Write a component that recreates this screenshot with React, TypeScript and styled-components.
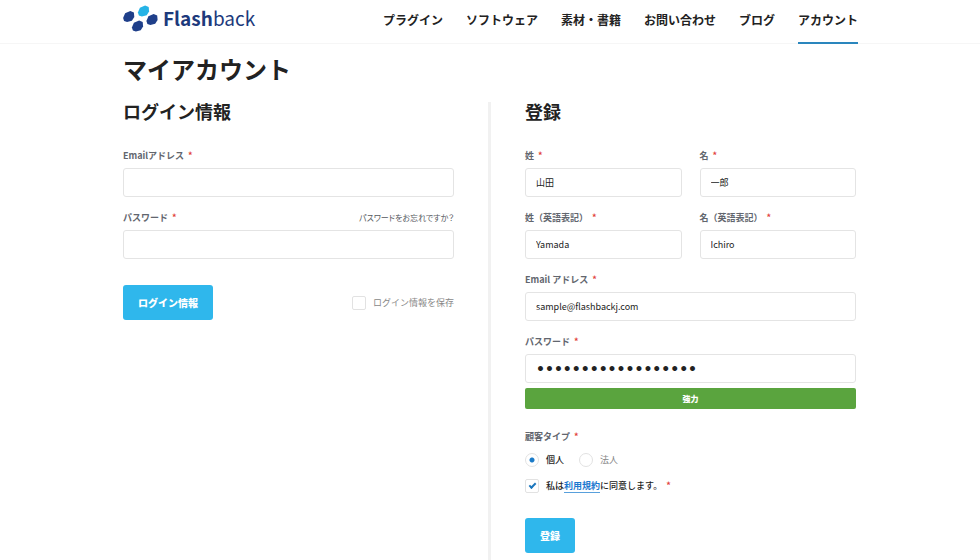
import React from "react";
import styled, { createGlobalStyle, css } from "styled-components";

const GlobalStyle = createGlobalStyle`
  *, *::before, *::after { box-sizing: border-box; }
  body {
    margin: 0;
    background: #fff;
    color: #222;
    font-family: "Noto Sans CJK JP", "Noto Sans", sans-serif;
    font-size: 9px;
    line-height: 13px;
  }
  h1, h2, p, ul { margin: 0; padding: 0; }
  button, input { font-family: inherit; }
`;

const Page = styled.div`
  min-height: 100vh;
  display: flex;
  flex-direction: column;
`;

const Header = styled.header`
  display: flex;
  justify-content: space-between;
  height: 44px;
  padding: 0 122px 0 123px;
  border-bottom: 1px solid #f6f6f6;
`;

const LogoLink = styled.a`
  display: flex;
  align-items: center;
  height: 36px;
  gap: 5px;
  color: #1d3a7c;
  text-decoration: none;
  font-size: 19px;
  line-height: 36px;
`;

const LogoMark = styled.svg`
  display: block;
  width: 35px;
  height: 28px;
`;

const LogoStrong = styled.span`
  font-weight: 700;
`;

const LogoLight = styled.span`
  font-weight: 400;
`;

const NavList = styled.ul`
  display: flex;
  gap: 23px;
  list-style: none;
`;

const NavLink = styled.a<{ $active?: boolean }>`
  display: block;
  height: 44px;
  color: #222;
  font-size: 12px;
  font-weight: 700;
  line-height: 40px;
  text-decoration: none;
  white-space: nowrap;
  border-bottom: 2px solid ${(p) => (p.$active ? "#2a86bd" : "transparent")};
`;

const Main = styled.main`
  flex: 1;
  display: flex;
  flex-direction: column;
  padding: 0 124px 0 123px;
`;

const PageTitle = styled.h1`
  margin-bottom: 8px;
  font-size: 24px;
  line-height: 50px;
`;

const Columns = styled.div`
  flex: 1;
  display: grid;
  grid-template-columns: 1fr 3px 1fr;
  column-gap: 34px;
`;

const Divider = styled.div`
  background: #f1f1f1;
`;

const SectionTitle = styled.h2`
  margin-bottom: 29px;
  font-size: 18px;
  line-height: 18px;
`;

const Form = styled.form`
  display: flex;
  flex-direction: column;
  gap: 14px;
`;

const FieldPair = styled.div`
  display: grid;
  grid-template-columns: 1fr 1fr;
  gap: 18px;
`;

const FieldBox = styled.div`
  display: flex;
  flex-direction: column;
  gap: 6px;
  min-width: 0;
`;

const LabelRow = styled.div`
  display: flex;
  justify-content: space-between;
`;

const labelText = css`
  color: #62666e;
  font-size: 9px;
  font-weight: 700;
  line-height: 13px;
`;

const Label = styled.label`
  ${labelText}
`;

const Star = styled.span`
  margin-left: 4px;
  color: #e2433c;
  font-weight: 700;
`;

const TextInput = styled.input`
  width: 100%;
  height: 29px;
  padding: 0 10px;
  border: 1px solid #e4e4e4;
  border-radius: 3px;
  background: #fff;
  color: #222;
  font-size: 9px;
  font-weight: 400;
  outline: none;
  &[type="password"] {
    font-family: "DejaVu Sans", sans-serif;
    font-size: 14px;
    font-weight: 700;
  }
`;

const ForgotLink = styled.a`
  color: #55585e;
  font-size: 8px;
  font-feature-settings: "palt";
  text-decoration: none;
`;

const Strength = styled.p`
  margin-top: -1px;
  border-radius: 2px;
  background: #5aa43e;
  color: #fff;
  font-size: 8px;
  font-weight: 900;
  line-height: 21px;
  text-align: center;
`;

const SubmitButton = styled.button`
  height: 35px;
  padding: 0 15px;
  border: 0;
  border-radius: 3px;
  background: #2fb7ec;
  color: #fff;
  font-size: 10px;
  font-weight: 900;
  cursor: pointer;
`;

const LoginActions = styled.div`
  display: flex;
  align-items: center;
  justify-content: space-between;
  margin-top: 12px;
`;

const Choice = styled.label<{ $muted?: boolean }>`
  display: flex;
  align-items: center;
  gap: 7px;
  color: ${(p) => (p.$muted ? "#888" : "#222")};
  font-size: 9px;
  font-weight: ${(p) => (p.$muted ? 400 : 500)};
  line-height: 14px;
`;

const Radio = styled.input`
  appearance: none;
  width: 14px;
  height: 14px;
  margin: 0;
  border: 1px solid #e2e2e2;
  border-radius: 50%;
  &:checked {
    background: radial-gradient(circle, #1b7bc8 0 2px, transparent 3px);
  }
`;

const Checkbox = styled.input`
  appearance: none;
  flex: none;
  width: 14px;
  height: 14px;
  margin: 0;
  border: 1px solid #e2e2e2;
  border-radius: 2px;
  display: grid;
  place-items: center;
  &:checked::before {
    content: "";
    width: 7px;
    height: 4px;
    margin-bottom: 2px;
    border: solid #1b76bd;
    border-width: 0 0 2px 2px;
    transform: rotate(-45deg);
  }
`;

const TypeGroup = styled.fieldset`
  margin: 7px 0 0;
  padding: 0;
  border: 0;
  min-width: 0;
`;

const TypeLegend = styled.legend`
  ${labelText}
  padding: 0;
`;

const Choices = styled.div`
  display: flex;
  gap: 15px;
  margin-top: 10px;
`;

const AgreeRow = styled.div`
  margin-top: -2px;
`;

const TermsLink = styled.a`
  color: #1b78cf;
  font-weight: 700;
  text-decoration: none;
  border-bottom: 1px solid #58a0dc;
`;

const RegisterActions = styled.div`
  margin-top: 11px;
`;

const PasswordGroup = styled.div`
  display: flex;
  flex-direction: column;
  gap: 6px;
`;

type FieldProps = {
  id: string;
  label: string;
  type?: string;
  value?: string;
  aside?: React.ReactNode;
};

function Field({ id, label, type = "text", value, aside }: FieldProps) {
  return (
    <FieldBox>
      <LabelRow>
        <Label htmlFor={id}>
          {label}
          <Star>*</Star>
        </Label>
        {aside}
      </LabelRow>
      <TextInput id={id} type={type} defaultValue={value} />
    </FieldBox>
  );
}

const hexagon = "M-5.6 1.6 L-3.6 -3.2 L1.6 -5.6 L5.2 -4 L5.6 0.4 L3.2 4.2 L-1.6 5.6 L-4.6 4.6 Z";

function Logo() {
  return (
    <LogoLink href="#" aria-label="Flashback">
      <LogoMark viewBox="0 0 35 28" aria-hidden="true">
        <path d={hexagon} transform="translate(20.5 7)" fill="#25b3e6" />
        <path d={hexagon} transform="translate(5.7 12.5)" fill="#1f3f8a" />
        <path d={hexagon} transform="translate(29 15.5)" fill="#1f3f8a" />
        <path d={hexagon} transform="translate(14.5 22)" fill="#1f3f8a" />
      </LogoMark>
      <span>
        <LogoStrong>Flash</LogoStrong>
        <LogoLight>back</LogoLight>
      </span>
    </LogoLink>
  );
}

const navItems = ["プラグイン", "ソフトウェア", "素材・書籍", "お問い合わせ", "ブログ", "アカウント"];

export default function App() {
  return (
    <Page lang="ja">
      <GlobalStyle />
      <Header>
        <Logo />
        <nav>
          <NavList>
            {navItems.map((item) => (
              <li key={item}>
                <NavLink href="#" $active={item === "アカウント"}>
                  {item}
                </NavLink>
              </li>
            ))}
          </NavList>
        </nav>
      </Header>
      <Main>
        <PageTitle>マイアカウント</PageTitle>
        <Columns>
          <section>
            <SectionTitle>ログイン情報</SectionTitle>
            <Form>
              <Field id="login-email" label="Emailアドレス" type="email" />
              <Field
                id="login-password"
                label="パスワード"
                type="password"
                aside={<ForgotLink href="#">パスワードをお忘れですか？</ForgotLink>}
              />
              <LoginActions>
                <SubmitButton type="button">ログイン情報</SubmitButton>
                <Choice $muted>
                  <Checkbox type="checkbox" />
                  ログイン情報を保存
                </Choice>
              </LoginActions>
            </Form>
          </section>
          <Divider />
          <section>
            <SectionTitle>登録</SectionTitle>
            <Form>
              <FieldPair>
                <Field id="last-name" label="姓" value="山田" />
                <Field id="first-name" label="名" value="一郎" />
              </FieldPair>
              <FieldPair>
                <Field id="last-name-en" label="姓（英語表記）" value="Yamada" />
                <Field id="first-name-en" label="名（英語表記）" value="Ichiro" />
              </FieldPair>
              <Field id="email" label="Email アドレス" type="email" value="sample@flashbackj.com" />
              <PasswordGroup>
                <Field id="password" label="パスワード" type="password" value="flashbackjapan2020" />
                <Strength>強力</Strength>
              </PasswordGroup>
              <TypeGroup>
                <TypeLegend>
                  顧客タイプ<Star>*</Star>
                </TypeLegend>
                <Choices>
                  <Choice>
                    <Radio type="radio" name="customer-type" defaultChecked />
                    個人
                  </Choice>
                  <Choice $muted>
                    <Radio type="radio" name="customer-type" />
                    法人
                  </Choice>
                </Choices>
              </TypeGroup>
              <AgreeRow>
                <Choice>
                  <Checkbox type="checkbox" defaultChecked />
                  <span>
                    私は<TermsLink href="#">利用規約</TermsLink>に同意します。
                    <Star>*</Star>
                  </span>
                </Choice>
              </AgreeRow>
              <RegisterActions>
                <SubmitButton type="button">登録</SubmitButton>
              </RegisterActions>
            </Form>
          </section>
        </Columns>
      </Main>
    </Page>
  );
}
